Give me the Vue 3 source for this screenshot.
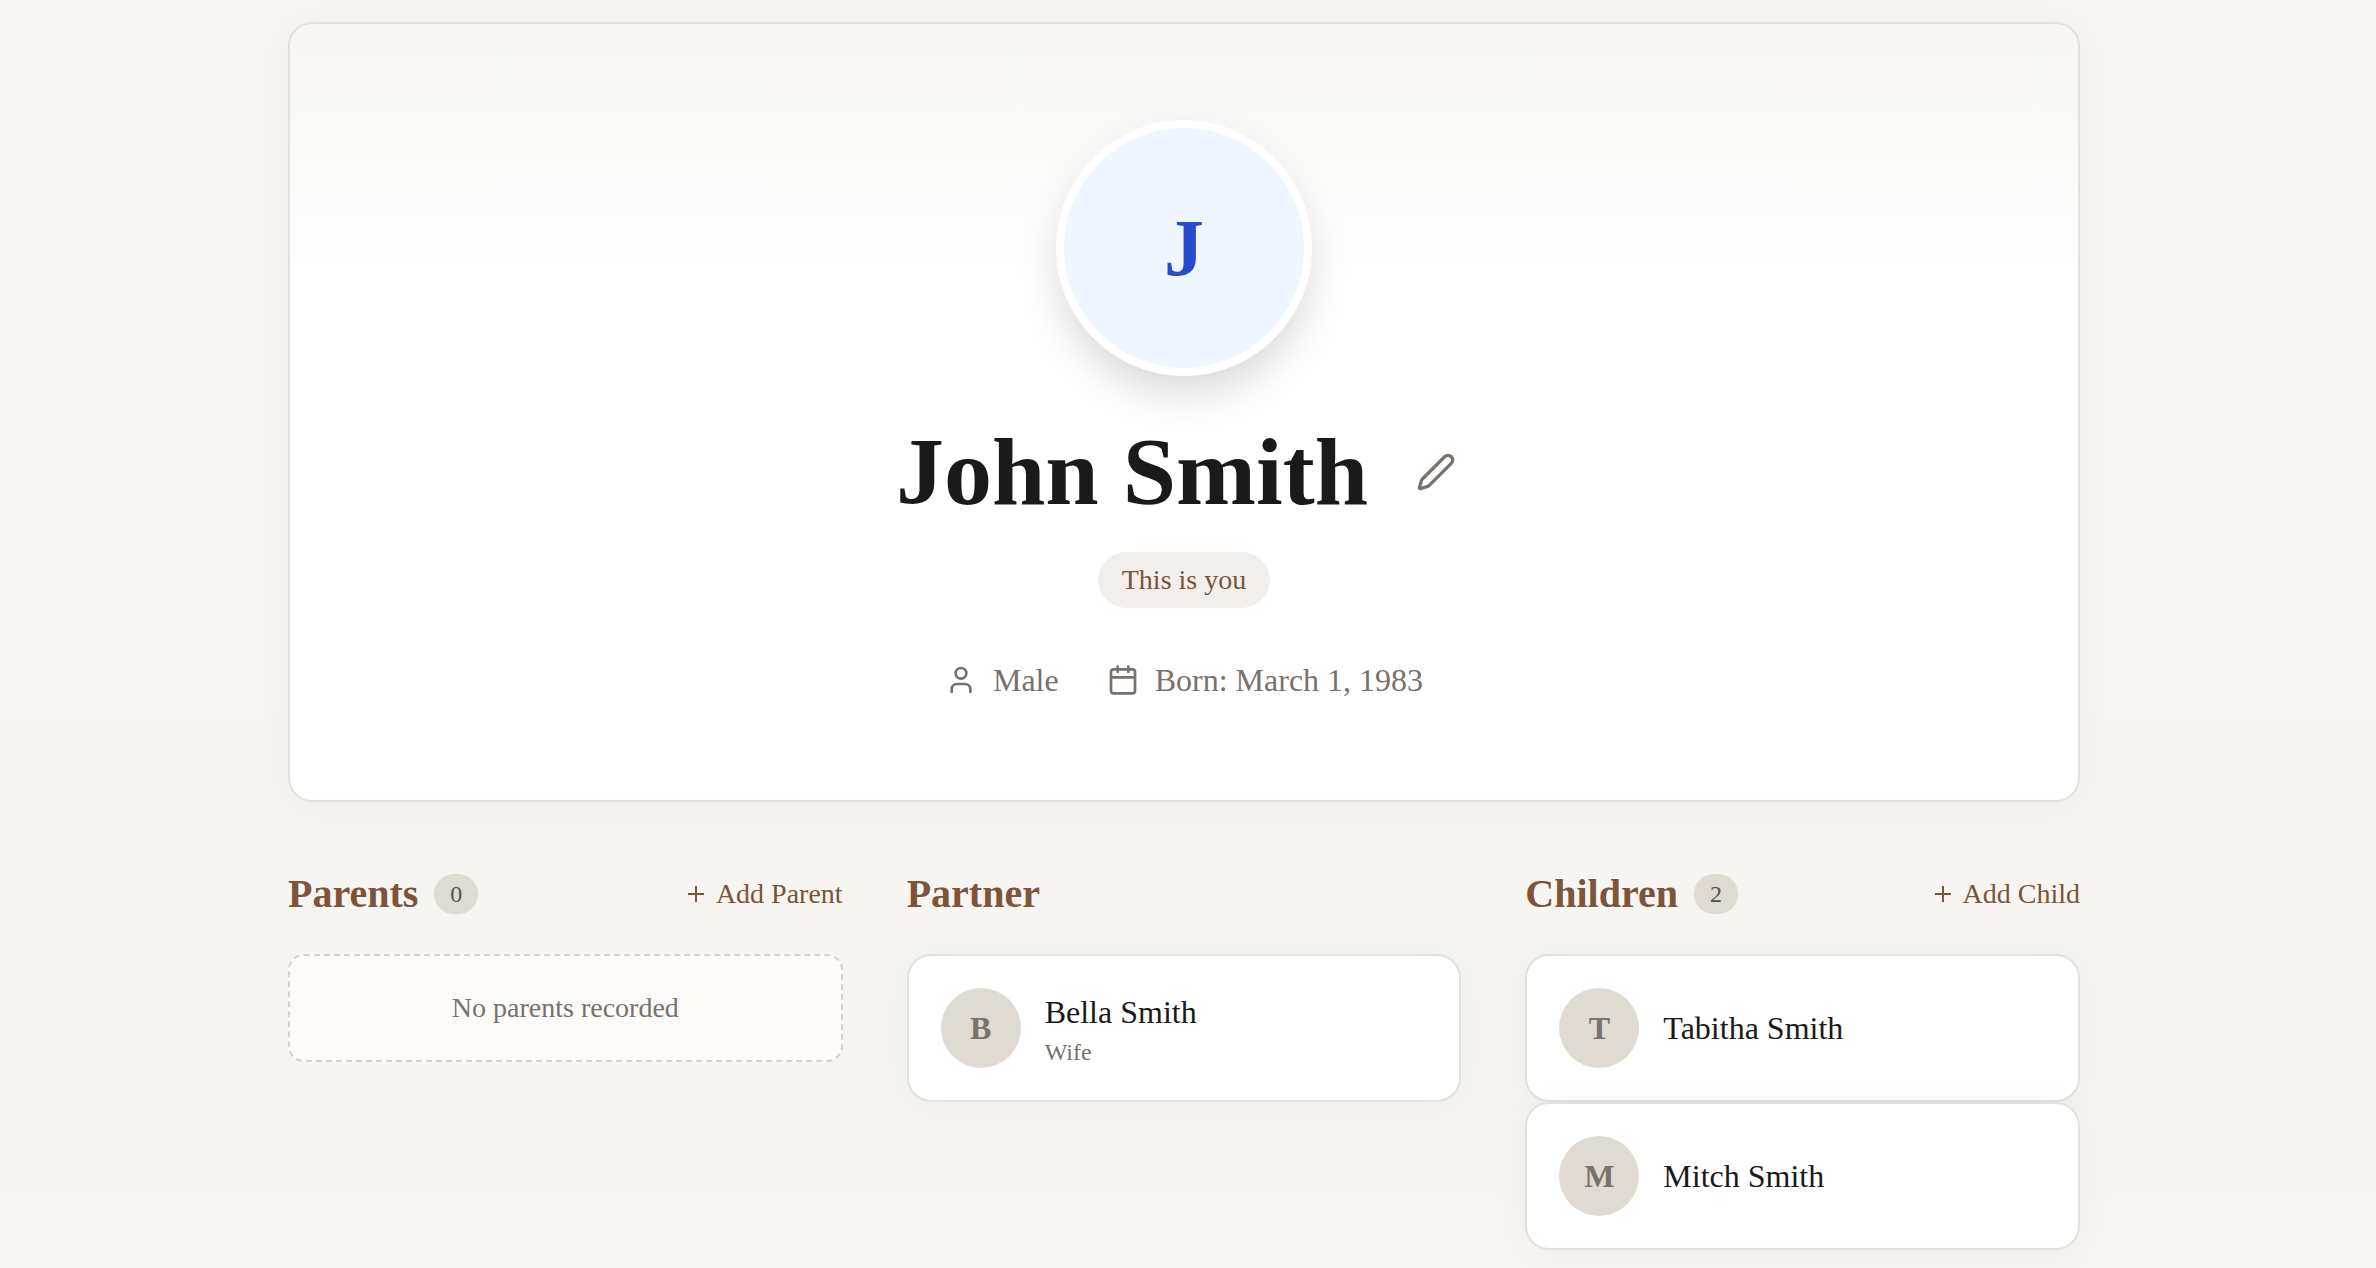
<script setup>
const person = {
  name: 'John Smith',
  gender: 'Male',
  born: 'March 1, 1983',
  isYou: true
}

const sections = [
  { title: 'Parents', count: 0, action: 'Add Parent', people: [], empty: 'No parents recorded' },
  { title: 'Partner', people: [{ name: 'Bella Smith', role: 'Wife' }] },
  {
    title: 'Children',
    count: 2,
    action: 'Add Child',
    people: [{ name: 'Tabitha Smith' }, { name: 'Mitch Smith' }]
  }
]

const initial = (name) => name.charAt(0).toUpperCase()
</script>

<template>
  <div class="page">
    <main class="container">

      <!-- profile header -->
      <header class="profile">
        <div class="profile-avatar">{{ initial(person.name) }}</div>

        <div class="name-row">
          <h1>{{ person.name }}</h1>
          <button type="button" class="edit-btn" aria-label="Edit">
            <svg class="icon-edit" viewBox="0 0 24 24">
              <path d="M21.174 6.812a1 1 0 0 0-3.986-3.987L3.842 16.174a2 2 0 0 0-.5.83l-1.321 4.352a.5.5 0 0 0 .623.622l4.353-1.32a2 2 0 0 0 .83-.497z" />
            </svg>
          </button>
        </div>

        <span v-if="person.isYou" class="you-badge">This is you</span>

        <div class="meta">
          <div class="meta-item">
            <svg class="icon-meta" viewBox="0 0 24 24">
              <path d="M19 21v-2a4 4 0 0 0-4-4H9a4 4 0 0 0-4 4v2" />
              <circle cx="12" cy="7" r="4" />
            </svg>
            <span>{{ person.gender }}</span>
          </div>
          <div class="meta-item">
            <svg class="icon-meta" viewBox="0 0 24 24">
              <path d="M8 2v4M16 2v4M3 10h18" />
              <rect x="3" y="4" width="18" height="18" rx="2" />
            </svg>
            <span>Born: {{ person.born }}</span>
          </div>
        </div>
      </header>

      <!-- relatives -->
      <div class="relations">
        <section v-for="section in sections" :key="section.title">
          <div class="section-head">
            <div class="section-title">
              <h2>{{ section.title }}</h2>
              <span v-if="section.count !== undefined" class="count">{{ section.count }}</span>
            </div>
            <button v-if="section.action" type="button" class="add-btn">
              <svg class="icon-add" viewBox="0 0 24 24">
                <path d="M4 12h16M12 4v16" />
              </svg>
              {{ section.action }}
            </button>
          </div>

          <a v-for="p in section.people" :key="p.name" href="#" class="person-card">
            <span class="person-avatar">{{ initial(p.name) }}</span>
            <span class="person-info">
              <span class="person-name">{{ p.name }}</span>
              <span v-if="p.role" class="person-role">{{ p.role }}</span>
            </span>
          </a>

          <p v-if="section.people.length === 0" class="empty">{{ section.empty }}</p>
        </section>
      </div>

    </main>
  </div>
</template>

<style>
body {
  background: #f9f5f2;
}
</style>

<style scoped>
.page {
  min-height: 100vh;
  box-sizing: border-box;
  padding: 22px 8px 18px 0;
  background: linear-gradient(#f9f5f2 0 717px, #f6f5f1 717px 1198px, #f9f5f2 1198px);
  font-family: "Liberation Serif", "Times New Roman", serif;
  color: #1a1a18;
}

.container {
  max-width: 1792px;
  margin: 0 auto;
}

h1, h2, p { margin: 0; }

button {
  border: none;
  background: none;
  font-family: inherit;
  cursor: pointer;
}

svg {
  display: block;
  flex-shrink: 0;
  fill: none;
  stroke: currentColor;
  stroke-width: 2;
  stroke-linecap: round;
  stroke-linejoin: round;
}

/* ── profile ─────────────────────────────────────────────────────────────── */
.profile {
  display: flex;
  flex-direction: column;
  align-items: center;
  padding: 96px;
  border: 2px solid #e3e1dc;
  border-radius: 24px;
  background: linear-gradient(#f7f6f4, #fff 256px);
  box-shadow: 0 4px 40px rgba(0,0,0,0.04);
}

.profile-avatar {
  box-sizing: border-box;
  width: 256px;
  height: 256px;
  display: flex;
  align-items: center;
  justify-content: center;
  border: 8px solid #fff;
  border-radius: 50%;
  background: #eff6ff;
  color: #284ccd;
  font-size: 80px;
  font-weight: 700;
  box-shadow: 0 20px 50px -10px rgba(0,0,0,0.2);
}

.name-row {
  display: flex;
  align-items: center;
  gap: 32px;
  margin-top: 48px;
}

h1 {
  font-size: 96px;
  line-height: 96px;
  font-weight: 700;
}

.edit-btn {
  padding: 16px;
  color: #78716c;
}

.icon-edit { width: 40px; height: 40px; }

.you-badge {
  margin-top: 32px;
  padding: 8px 24px;
  border-radius: 28px;
  background: #f2eeeb;
  color: #7b543a;
  font-size: 28px;
  line-height: 40px;
}

.meta {
  display: flex;
  gap: 48px;
  margin-top: 48px;
}

.meta-item {
  display: flex;
  align-items: center;
  gap: 16px;
  color: #78716c;
  font-size: 32px;
  line-height: 48px;
}

.icon-meta { width: 32px; height: 32px; }

/* ── relations ───────────────────────────────────────────────────────────── */
.relations {
  display: grid;
  grid-template-columns: repeat(3, 1fr);
  gap: 64px;
  margin-top: 64px;
}

.section-head {
  display: flex;
  align-items: center;
  justify-content: space-between;
  margin-bottom: 32px;
}

.section-title {
  display: flex;
  align-items: center;
  gap: 16px;
}

h2 {
  color: #7b543a;
  font-size: 40px;
  line-height: 56px;
  font-weight: 700;
}

.count {
  padding: 4px 16px;
  border-radius: 20px;
  background: #dfdad2;
  color: #57534e;
  font-size: 24px;
  line-height: 32px;
}

.add-btn {
  display: flex;
  align-items: center;
  gap: 8px;
  padding: 0;
  color: #7b543a;
  font-size: 28px;
  line-height: 40px;
}

.icon-add {
  width: 24px;
  height: 24px;
  stroke-linecap: butt;
}

.person-card {
  display: flex;
  align-items: center;
  gap: 24px;
  padding: 32px;
  border: 2px solid #e3e1dc;
  border-radius: 24px;
  background: #fff;
  box-shadow: 0 4px 40px rgba(0,0,0,0.04);
  color: #1a1a18;
  text-decoration: none;
}

.person-avatar {
  width: 80px;
  height: 80px;
  display: flex;
  align-items: center;
  justify-content: center;
  flex-shrink: 0;
  border-radius: 50%;
  background: #dfdad2;
  color: #78716c;
  font-size: 32px;
  font-weight: 700;
}

.person-info {
  display: flex;
  flex-direction: column;
}

.person-name {
  font-size: 32px;
  line-height: 48px;
}

.person-role {
  color: #78716c;
  font-size: 24px;
  line-height: 32px;
}

.empty {
  padding: 32px;
  border: 2px dashed #d6d1c9;
  border-radius: 16px;
  background: #fcfbfa;
  color: #78716c;
  font-size: 28px;
  line-height: 40px;
  text-align: center;
}

@media (max-width: 1100px) {
  .relations { grid-template-columns: 1fr; }
  .profile { padding: 48px; }
}
</style>
